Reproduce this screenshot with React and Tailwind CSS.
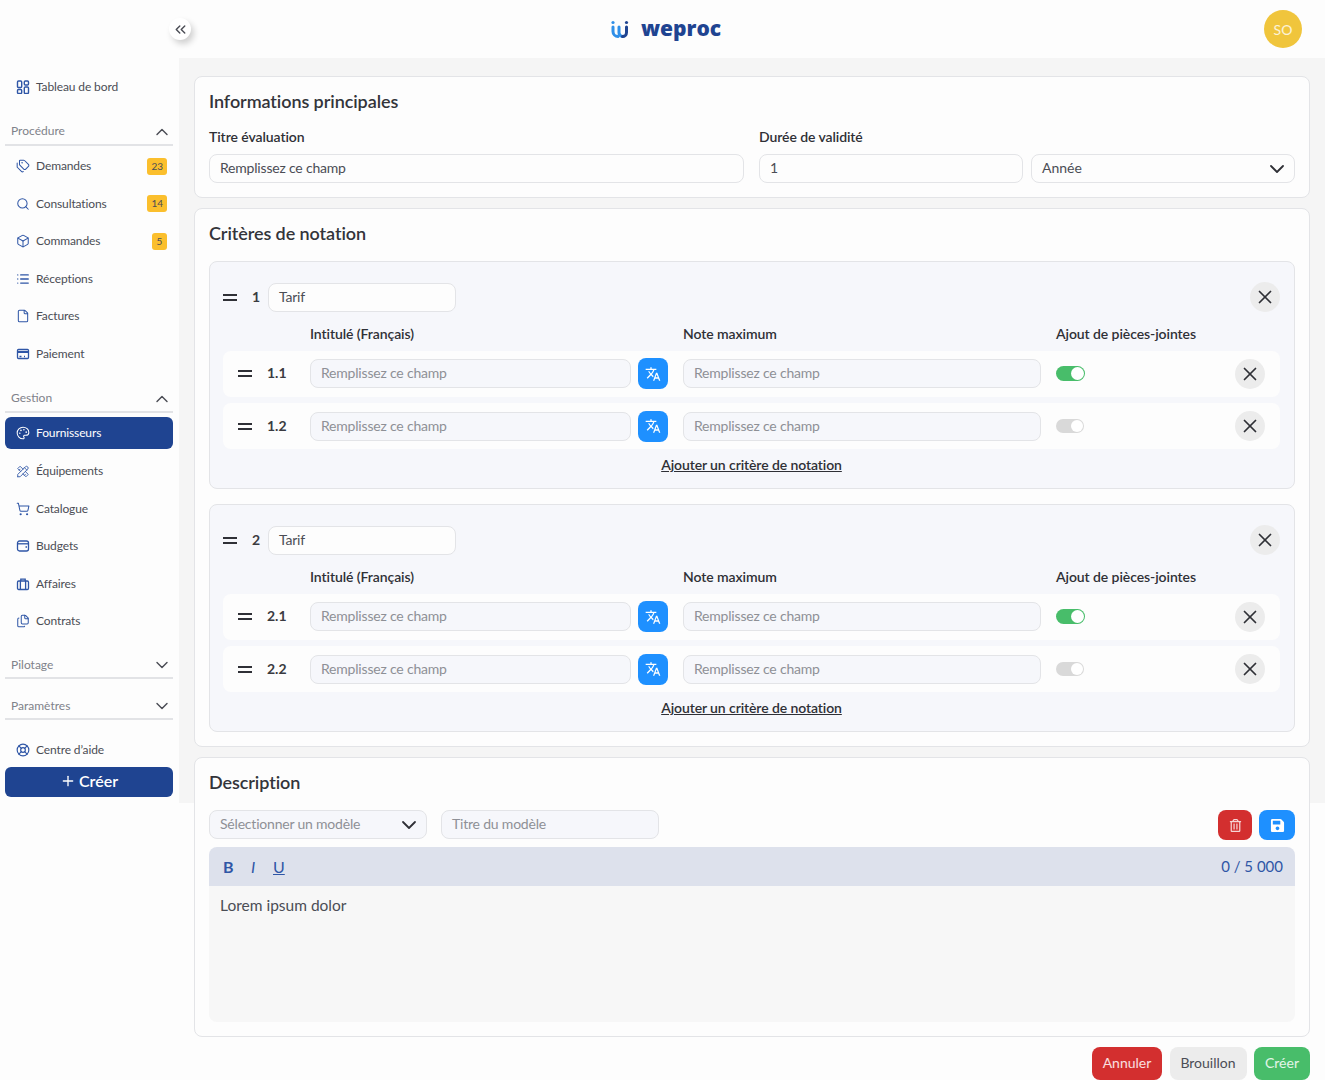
import {
  ChevronsLeft,
  ChevronUp,
  ChevronDown,
  Tags,
  Search,
  Box,
  List,
  File,
  Palette,
  ShoppingCart,
  Files,
  LifeBuoy,
  Plus,
  X,
} from "lucide-react";
import { MdTranslate } from "react-icons/md";
import { TbTools } from "react-icons/tb";
import { FaSave, FaRegTrashAlt } from "react-icons/fa";

const GridIcon = () => (
  <svg width="14" height="14" viewBox="0 0 14 14" fill="none" stroke="currentColor" strokeWidth="1.4">
    <rect x="1.5" y="1" width="4.2" height="6.5" rx="1" />
    <rect x="8.3" y="1" width="4.2" height="4" rx="1" />
    <rect x="1.5" y="9.5" width="4.2" height="4" rx="1" />
    <rect x="8.3" y="7" width="4.2" height="6.5" rx="1" />
  </svg>
);

const CardIcon = () => (
  <svg width="14" height="14" viewBox="0 0 14 14" fill="none" stroke="currentColor" strokeWidth="1.3">
    <rect x="1.5" y="2.5" width="11" height="9" rx="1" />
    <path d="M1.5 5h11" strokeWidth="2" />
    <path d="M3.5 9.5h2M8 9.5h1" />
  </svg>
);

const WalletIcon = () => (
  <svg width="14" height="14" viewBox="0 0 14 14" fill="none" stroke="currentColor" strokeWidth="1.3">
    <rect x="1.5" y="2" width="11" height="10" rx="2" />
    <path d="M1.5 4.8h11" />
    <path d="M9.5 8h1.5" />
  </svg>
);

const CaseIcon = () => (
  <svg width="14" height="14" viewBox="0 0 14 14" fill="none" stroke="currentColor" strokeWidth="1.3">
    <rect x="1.5" y="4" width="11" height="8.5" rx="1.2" />
    <path d="M4.8 4V2.2h4.4V4M4.4 4v8.5M9.6 4v8.5" />
  </svg>
);

const Item = ({ icon, label, badge, active }) => (
  <div
    className={
      active
        ? "flex items-center h-[32px] mt-[4px] mb-[4px] px-[11px] gap-[6px] rounded-md bg-[#1f4491] text-white"
        : "flex items-center h-[37.5px] px-[11px] gap-[6px] text-[#4b4d55]"
    }
  >
    <span className={active ? "w-[14px] flex justify-center text-white" : "w-[14px] flex justify-center text-[#2f56a6]"}>
      {icon}
    </span>
    <span className="flex-1 text-[12px] tracking-[-0.12px]">{label}</span>
    {badge && (
      <span className="h-[17px] min-w-[15px] px-[4px] rounded-[3px] bg-[#fbbf2d] text-[#4b4d55] text-[10px] flex items-center justify-center mr-[-5px]">
        {badge}
      </span>
    )}
  </div>
);

const Section = ({ label, open }) => (
  <div className="flex items-center justify-between h-[26px] pl-[6px] pr-[1px] border-b-2 border-[#e2e3e6] text-[#80828a] text-[12px]">
    <span className="pb-[1px]">{label}</span>
    {open ? <ChevronUp size={20} strokeWidth={1.7} className="text-[#4b4d55]" /> : <ChevronDown size={20} strokeWidth={1.7} className="text-[#4b4d55]" />}
  </div>
);

const Sidebar = () => (
  <aside className="w-[179px] shrink-0 h-full bg-[#fdfdfd] pl-[5px] pr-[6px] pt-[10px]">
    <Item icon={<GridIcon />} label="Tableau de bord" />
    <div className="mt-[14px]">
      <Section label="Procédure" open />
    </div>
    <div className="mt-[2px]">
      <Item icon={<Tags size={14} strokeWidth={1.75} />} label="Demandes" badge="23" />
      <Item icon={<Search size={14} strokeWidth={1.75} />} label="Consultations" badge="14" />
      <Item icon={<Box size={14} strokeWidth={1.75} />} label="Commandes" badge="5" />
      <Item icon={<List size={14} strokeWidth={2.25} />} label="Réceptions" />
      <Item icon={<File size={14} strokeWidth={1.75} />} label="Factures" />
      <Item icon={<CardIcon />} label="Paiement" />
    </div>
    <div className="mt-[14px]">
      <Section label="Gestion" open />
    </div>
    <Item icon={<Palette size={14} strokeWidth={1.75} />} label="Fournisseurs" active />
    <Item icon={<TbTools size={15} strokeWidth={1.5} />} label="Équipements" />
    <Item icon={<ShoppingCart size={14} strokeWidth={1.75} />} label="Catalogue" />
    <Item icon={<WalletIcon />} label="Budgets" />
    <Item icon={<CaseIcon />} label="Affaires" />
    <Item icon={<Files size={14} strokeWidth={1.75} />} label="Contrats" />
    <div className="mt-[13px]">
      <Section label="Pilotage" />
    </div>
    <div className="mt-[15px]">
      <Section label="Paramètres" />
    </div>
    <div className="mt-[11px]">
      <Item icon={<LifeBuoy size={14} strokeWidth={2} />} label="Centre d’aide" />
    </div>
    <button className="w-full h-[30px] -mt-[2px] pb-[2px] rounded-md bg-[#1f4491] text-white text-[16px] font-semibold flex items-center justify-center gap-[3px]">
      <Plus size={16} />
      Créer
    </button>
  </aside>
);

const Field = ({ value, placeholder, className }) => (
  <div
    className={`h-[29px] flex items-center px-[10px] pb-[2px] rounded-lg border border-[#e3e4e7] text-[14px] tracking-[-0.2px] ${className} ${
      placeholder ? "text-[#8e9096]" : "text-[#4b4d55]"
    }`}
  >
    {value || placeholder}
  </div>
);

const Handle = () => <span className="block w-[14px] h-[7px] border-y-2 border-[#2f3036] shrink-0" />;

const CloseButton = () => (
  <button className="w-[30px] h-[30px] rounded-full bg-[#ececec] text-[#2f3036] flex items-center justify-center">
    <X size={22} strokeWidth={1.9} />
  </button>
);

const Toggle = ({ on }) => (
  <div
    className={
      on
        ? "w-[29px] h-[15px] rounded-full bg-[#48bd6a] p-[1px] flex justify-end"
        : "w-[28px] h-[14px] rounded-full bg-[#d9d9d9] p-[1px] flex justify-end"
    }
  >
    <span className="h-full aspect-square rounded-full bg-white" />
  </div>
);

const SubRow = ({ num, on }) => (
  <div className={on ? "flex items-center h-[46px] pb-[1px] bg-[#fdfdfd] rounded-lg" : "flex items-center h-[46px] bg-[#fdfdfd] rounded-lg"}>
    <div className="w-[87px] pl-[15px] flex items-center shrink-0">
      <Handle />
      <span className="ml-[15px] pb-[2px] text-[14px] font-bold text-[#3a3b41]">{num}</span>
    </div>
    <Field placeholder="Remplissez ce champ" className="w-[321px] bg-[#f6f7fb]" />
    <button className="ml-[7px] w-[30px] h-[31px] rounded-lg bg-[#1e90ff] text-white flex items-center justify-center">
      <MdTranslate size={16} />
    </button>
    <Field placeholder="Remplissez ce champ" className="ml-[15px] w-[358px] bg-[#f6f7fb]" />
    <div className="ml-[15px] flex-1 flex items-center">
      <Toggle on={on} />
    </div>
    <div className="mr-[15px]">
      <CloseButton />
    </div>
  </div>
);

const Group = ({ num }) => (
  <div className="h-[228px] bg-[#f6f7fb] border border-[#e3e4e7] rounded-lg pl-[13px] pr-[14px] pt-[20px]">
    <div className="flex items-center h-[30px]">
      <Handle />
      <span className="ml-[15px] w-[16px] pb-[2px] text-[14px] font-bold text-[#3a3b41]">{num}</span>
      <Field value="Tarif" className="w-[188px] bg-[#fdfdfd]" />
      <div className="ml-auto">
        <CloseButton />
      </div>
    </div>
    <div className="flex items-center h-[39px] pt-[3px] text-[14px] font-semibold text-[#2f3036] tracking-[-0.08px]">
      <span className="ml-[87px] w-[373px]">Intitulé (Français)</span>
      <span className="w-[373px]">Note maximum</span>
      <span>Ajout de pièces-jointes</span>
    </div>
    <div className="flex flex-col gap-[6px]">
      <SubRow num={`${num}.1`} on />
      <SubRow num={`${num}.2`} />
    </div>
    <div className="text-center mt-[5px] text-[14px] font-semibold text-[#2f3036] underline tracking-[-0.1px]">
      Ajouter un critère de notation
    </div>
  </div>
);

const Card = ({ title, className, children }) => (
  <section className={`bg-[#fdfdfd] border border-[#e3e4e7] rounded-lg px-[14px] ${className}`}>
    <h2 className="text-[18px] font-semibold text-[#33343a] tracking-[-0.08px]">{title}</h2>
    {children}
  </section>
);

export default function App() {
  return (
    <div className="font-['Lato',sans-serif] bg-[#fdfdfd] min-h-[1080px]">
      <header className="h-[58px] flex items-center relative bg-[#fdfdfd]">
        <div className="w-[169px]" />
        <button className="w-[22px] h-[22px] rounded-full bg-white shadow-[3px_4px_6px_rgba(0,0,0,0.18)] flex items-center justify-center text-[#4b4d55]">
          <ChevronsLeft size={17} />
        </button>
        <div className="ml-[420px] flex items-center gap-[12px]">
          <svg width="18" height="18" viewBox="0 0 18 18" fill="none" strokeLinecap="round">
            <path d="M2 7v4.5a5 5 0 0 0 5 5" stroke="#2f8fe8" strokeWidth="3" />
            <path d="M8 7v5.5a4 4 0 0 0 3.5 4" stroke="#2f8fe8" strokeWidth="3" />
            <path d="M15.5 7v5.5a4 4 0 0 1-4 4" stroke="#1f4491" strokeWidth="3" />
            <circle cx="2" cy="2.5" r="1.6" fill="#2f8fe8" />
            <circle cx="15.5" cy="2.5" r="1.6" fill="#1f4491" />
          </svg>
          <span className="text-[21px] font-extrabold text-[#1f4491] font-['Open_Sans',sans-serif]">weproc</span>
        </div>
        <div className="ml-auto mr-[23px] w-[38px] h-[38px] rounded-full bg-[#f0c53c] text-white/80 text-[14px] flex items-center justify-center">
          SO
        </div>
      </header>
      <div className="flex h-[745px] bg-[#f5f5f5]">
        <Sidebar />
        <main className="flex-1 px-[15px] pt-[18px]">
          <Card title="Informations principales" className="h-[122px] pt-[11px]">
            <div className="flex mt-[11px] text-[14px] font-semibold text-[#2f3036] tracking-[-0.08px]">
              <span className="w-[550px]">Titre évaluation</span>
              <span>Durée de validité</span>
            </div>
            <div className="flex mt-[7px]">
              <Field value="Remplissez ce champ" className="w-[535px]" />
              <Field value="1" className="ml-[15px] w-[264px]" />
              <div className="ml-[8px] flex-1 h-[29px] flex items-center justify-between pl-[10px] pr-[5px] rounded-lg border border-[#e3e4e7] text-[14px] text-[#4b4d55]">
                <span className="pb-[2px]">Année</span>
                <ChevronDown size={24} strokeWidth={1.8} className="text-[#2f3036]" />
              </div>
            </div>
          </Card>
          <Card title="Critères de notation" className="h-[539px] mt-[10px] pt-[11px]">
            <div className="flex flex-col gap-[15px] mt-[14px]">
              <Group num={1} />
              <Group num={2} />
            </div>
          </Card>
          <Card title="Description" className="h-[280px] mt-[10px] pt-[11px]">
            <div className="flex items-start mt-[14px]">
              <div className="w-[218px] h-[29px] flex items-center justify-between pl-[10px] pr-[5px] rounded-lg border border-[#e3e4e7] bg-[#f6f7fb] text-[14px] text-[#8e9096] tracking-[-0.2px]">
                <span className="pb-[2px]">Sélectionner un modèle</span>
                <ChevronDown size={24} strokeWidth={1.8} className="text-[#2f3036]" />
              </div>
              <Field placeholder="Titre du modèle" className="ml-[14px] w-[218px] bg-[#f6f7fb]" />
              <button className="ml-auto w-[34px] h-[30px] rounded-lg bg-[#d32f2f] text-white/80 flex items-center justify-center">
                <FaRegTrashAlt size={13} />
              </button>
              <button className="ml-[7px] w-[36px] h-[30px] rounded-lg bg-[#1e90ff] text-white flex items-center justify-center">
                <FaSave size={15} />
              </button>
            </div>
            <div className="mt-[7px] h-[39px] rounded-t-lg bg-[#dde1ec] flex items-center px-[14px] text-[#2f56a6]">
              <span className="text-[16px] font-bold w-[25px]">B</span>
              <span className="text-[16px] italic w-[22px] ml-[3px]">I</span>
              <span className="text-[16px] underline">U</span>
              <span className="ml-auto mr-[-2px] text-[15px]">0 / 5 000</span>
            </div>
            <div className="h-[136px] bg-[#f7f7f7] rounded-b-lg px-[11px] pt-[8px] text-[15.5px] text-[#4b4d55]">
              Lorem ipsum dolor
            </div>
          </Card>
          <div className="flex justify-end gap-[7.5px] mt-[10px]">
            <button className="w-[70px] h-[33px] pb-[2px] rounded-lg bg-[#d32f2f] text-white/85 text-[14px]">Annuler</button>
            <button className="w-[77px] h-[33px] pb-[2px] rounded-lg bg-[#ececec] text-[#4b4d55] text-[14px]">Brouillon</button>
            <button className="w-[56px] h-[33px] pb-[2px] rounded-lg bg-[#48bd6a] text-white/85 text-[14px]">Créer</button>
          </div>
        </main>
      </div>
    </div>
  );
}
